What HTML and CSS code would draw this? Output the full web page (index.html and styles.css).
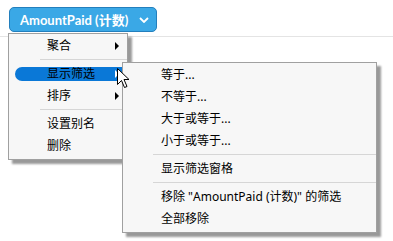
FILE: index.html
```html
<!DOCTYPE html>
<html lang="zh-CN">
<head>
    <meta charset="UTF-8">
    <title>筛选菜单</title>
    <link rel="stylesheet" href="styles.css">
</head>
<body>
    <div class="toolbar">
        <button class="campo">
            <span>AmountPaid (计数)</span>
            <svg class="chevron" width="10" height="6" viewBox="0 0 10 6"><path d="M1 1 L5 5 L9 1" fill="none" stroke="#fff" stroke-width="1.8"/></svg>
        </button>
    </div>

    <!-- menu principal -->
    <ul class="menu menu-principal">
        <li class="item"><span>聚合</span><i class="seta"></i></li>
        <li class="separador"></li>
        <li class="item ativo"><span>显示筛选</span><i class="seta"></i></li>
        <li class="item"><span>排序</span><i class="seta"></i></li>
        <li class="separador"></li>
        <li class="item"><span>设置别名</span></li>
        <li class="item"><span>删除</span></li>
    </ul>

    <!-- submenu de filtros -->
    <ul class="menu submenu">
        <li class="item"><span>等于...</span></li>
        <li class="item"><span>不等于...</span></li>
        <li class="item"><span>大于或等于...</span></li>
        <li class="item"><span>小于或等于...</span></li>
        <li class="separador"></li>
        <li class="item"><span>显示筛选窗格</span></li>
        <li class="separador"></li>
        <li class="item"><span>移除 "AmountPaid (计数)" 的筛选</span></li>
        <li class="item"><span>全部移除</span></li>
    </ul>

    <svg class="cursor" width="13" height="21" viewBox="0 0 13 21">
        <path d="M0.5 0.5 L0.5 16.5 L4.5 12.5 L7.5 19.5 L10 18.5 L7 11.5 L12 11.5 Z" fill="#fff" stroke="#000" stroke-width="1"/>
    </svg>
</body>
</html>
```

FILE: styles.css
```css
body {
    margin: 0;
    background-color: #fff;
    font-family: "Noto Sans", "Noto Sans CJK SC", sans-serif;
    font-size: 12px;
    color: #000;
}

.toolbar {
    height: 37px;
    border-bottom: 1px solid #e4e4e4;
    padding: 7px 0 0 9px;
    box-sizing: border-box;
}

.campo {
    width: 148px;
    height: 25px;
    display: flex;
    align-items: center;
    justify-content: space-between;
    padding: 0 7px 0 10px;
    box-sizing: border-box;
    background-color: #3aa8e6;
    border: 1px solid #237fbd;
    border-radius: 5px;
    color: #fff;
    font-family: Lato, "Noto Sans CJK SC", sans-serif;
    font-weight: bold;
    font-size: 13px;
}

.menu {
    position: absolute;
    margin: 0;
    list-style: none;
    background-color: #f7f7f7;
    border: 1px solid #a0a0a0;
    box-shadow: 4px 4px 2px rgba(0, 0, 0, 0.4);
    box-sizing: border-box;
}

.menu-principal {
    left: 8px;
    top: 33px;
    width: 120px;
    height: 127px;
    padding: 1px 0 0 0;
}

.submenu {
    left: 122px;
    top: 62px;
    width: 255px;
    height: 171px;
    padding: 1px 0 0 0;
    z-index: 2;
}

.item {
    height: 22px;
    display: flex;
    align-items: center;
    padding-left: 38px;
    position: relative;
    line-height: 1;
}

.separador {
    height: 1px;
    background-color: #d6d6d6;
    margin: 2px 0 3px 31px;
}

.submenu .separador {
    margin-left: 30px;
}

.seta {
    position: absolute;
    right: 8px;
    top: 7px;
    width: 0;
    height: 0;
    border-top: 4px solid transparent;
    border-bottom: 4px solid transparent;
    border-left: 4px solid #000;
}

/* item destacado */
.ativo::before {
    content: "";
    position: absolute;
    left: 6px;
    right: -10px;
    top: 4px;
    height: 14px;
    border-radius: 7px 0 0 7px;
    background-color: #0a78d7;
}

.ativo span {
    position: relative;
}

.ativo .seta {
    border-left-color: #fff;
}

.cursor {
    position: absolute;
    left: 117px;
    top: 68px;
    z-index: 3;
}
```
